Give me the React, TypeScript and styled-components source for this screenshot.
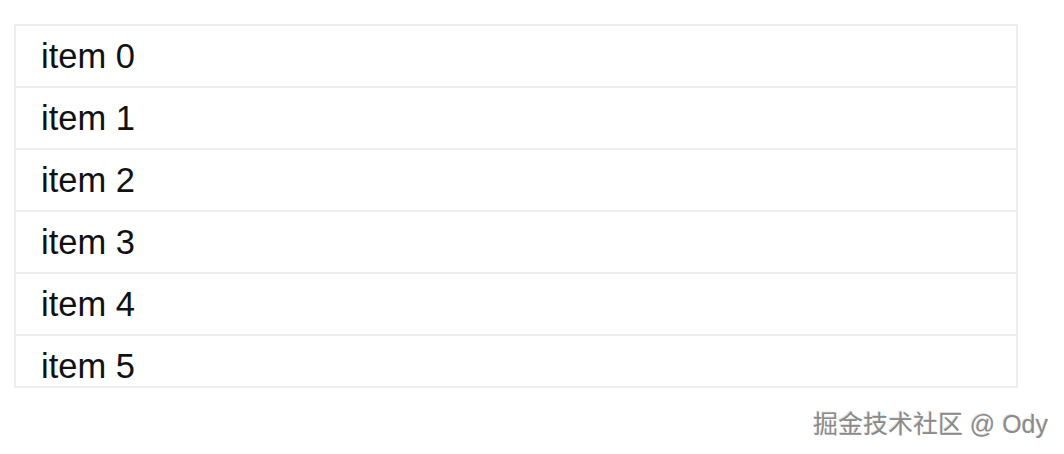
import styled, { createGlobalStyle } from "styled-components";

const GlobalStyle = createGlobalStyle`
    html, body {
        margin: 0;
        padding: 0;
        background-color: #ffffff;
    }
    body {
        width: 1064px;
        height: 454px;
        overflow: hidden;
        font-family: "Liberation Sans", Arial, sans-serif;
    }
`;

const Page = styled.div`
    position: relative;
    width: 1064px;
    height: 454px;
    padding: 24px 0 0 14px;
    box-sizing: border-box;
`;

const ListBox = styled.div`
    width: 1004px;
    height: 364px;
    box-sizing: border-box;
    border: 2px solid #eeeeee;
    overflow: hidden;
`;

const Row = styled.div`
    display: flex;
    align-items: center;
    height: 62px;
    box-sizing: border-box;
    padding-left: 25px;
    border-bottom: 2px solid #eeeeee;
    font-size: 34.5px;
    color: #111111;
`;

const Watermark = styled.span`
    position: absolute;
    right: 16px;
    bottom: 14px;
    font-family: "Liberation Sans", "Noto Sans CJK SC", sans-serif;
    font-size: 25px;
    color: #8a8a8a;
    text-shadow: 1px 1px 0 #ffffff, -1px -1px 0 rgba(0, 0, 0, 0.12);
    white-space: nowrap;
`;

const items = [0, 1, 2, 3, 4, 5];

function App() {
    return (
        <>
            <GlobalStyle />
            <Page>
                <ListBox>
                    {items.map((n) => (
                        <Row key={n}>item {n}</Row>
                    ))}
                </ListBox>
                <Watermark>掘金技术社区 @ Ody</Watermark>
            </Page>
        </>
    );
}

export default App;
